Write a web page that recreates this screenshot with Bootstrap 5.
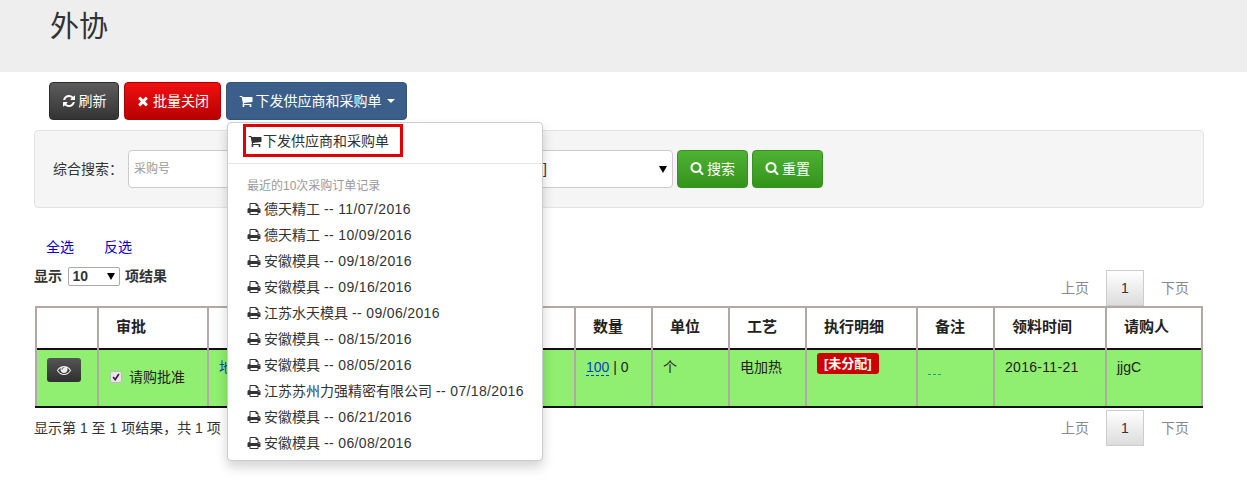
<!DOCTYPE html>
<html lang="zh">
<head>
<meta charset="utf-8">
<title>外协</title>
<link rel="stylesheet" href="https://cdn.jsdelivr.net/npm/bootstrap@5.3.0/dist/css/bootstrap.min.css">
<style>
html,body{min-height:481px}
body{font-family:"Liberation Sans","Noto Sans CJK SC",Arial,sans-serif;font-size:14px;color:#333;background:#fff;line-height:20px}
.ico{width:1em;height:1em;fill:currentColor;vertical-align:-2px;flex:none}
.page-top{background:#eee;height:72px;padding:8px 50px}
.page-top h1{font-size:29px;line-height:38px;margin:0;font-weight:400;color:#333}
.tool-row{margin:10px 0 0 49px;gap:5px;height:38px}
.gbtn{border:1px solid transparent;border-radius:4px;color:#fff;font-size:14px;height:38px;padding:0 12px;display:flex;align-items:center;gap:3px;white-space:nowrap}
.gbtn:hover{color:#fff}
.g-dark{background:linear-gradient(#5c5c5c,#343434);border-color:#2c2c2c;padding:0 11.5px}
.g-red{background:linear-gradient(#f01010,#b80000);border-color:#b00000;padding:0 11px}
.g-blue{background:#3b5f8a;border-color:#335378;border-radius:4px!important;padding:0 11.5px}
.g-green{background:linear-gradient(#4fb233,#33941a);border-color:#37931f}
.g-blue::after{content:"";border-top:4px solid #fff;border-left:4px solid transparent;border-right:4px solid transparent;margin-left:2px}
.order-menu{display:block;top:100%;left:1px;margin:2px 0 0;width:316px;height:339px;padding:1px 0 0;border:1px solid #ccc;border-radius:4px;box-shadow:0 6px 12px rgba(0,0,0,.175);z-index:20;font-size:14px}
.menu-first{display:flex;align-items:center;gap:1px;margin:0 0 6px 15px;width:160px;height:33px;border:3px solid #e00000;padding-left:2px;color:#333;text-decoration:none}
.order-menu .dropdown-divider{margin:0 0 13px;border-color:#e5e5e5;opacity:1}
.menu-head{font-size:12px;color:#999;line-height:18px;padding-left:19px;margin-bottom:1px}
.menu-line{display:flex;align-items:center;gap:3px;height:26px;padding-left:19px;color:#333;text-decoration:none;white-space:nowrap}
.dt{letter-spacing:.35px;margin-left:4px}
.search-well{margin:10px 43px 0 34px;height:78px;background:#f5f5f5;border:1px solid #e3e3e3;border-radius:4px;padding:0 18px;gap:4px}
.search-label{width:71px;flex:none}
.search-input{width:357px;height:38px;border:1px solid #ccc;border-radius:4px;padding:0 5px;font-size:12px;background:#fff;flex:none}
.search-input::placeholder{color:#999}
.search-select{width:192px;height:38px;margin-left:-8px;border:1px solid #ccc;border-radius:4px;background:#fff url("data:image/svg+xml,%3Csvg xmlns='http://www.w3.org/2000/svg' width='8' height='7'%3E%3Cpath d='M0 0h8L4 7z'/%3E%3C/svg%3E") no-repeat right 5px center;appearance:none;padding:0 16px 0 1px;color:#333;font-size:14px;flex:none}
.pick-row{margin:29px 0 0 46px;gap:30px;height:20px}
.pick-row a{color:#00c;text-decoration:none}
.len-row{margin:3px 49px 0 34px;height:46px}
.len-label{font-weight:700;padding-bottom:20px;display:flex;align-items:center;gap:5.500px}
.len-select{width:52px;height:19px;border:1px solid #aaa;border-radius:2px;font-weight:700;font-size:14px;line-height:16px;padding:0 0 0 4px;background:#fff url("data:image/svg+xml,%3Csvg xmlns='http://www.w3.org/2000/svg' width='8' height='7'%3E%3Cpath d='M0 0h8L4 7z'/%3E%3C/svg%3E") no-repeat right 4px center;appearance:none;color:#333}
.pager{display:flex;align-items:center;color:#888}
.pager span{width:46px;text-align:center}
.pager .pg-on{width:38px;height:36px;line-height:34px;margin:0 8px;border:1px solid #ccc;color:#333;background:linear-gradient(#fff,#dcdcdc)}
.data-wrap{margin:0 44px 0 35px}
.data-grid{width:1168px;table-layout:fixed;border-collapse:collapse;color:#222}
.data-grid th,.data-grid td{border-left:2px solid #b3a8a8;border-right:2px solid #b3a8a8;vertical-align:top;text-align:left}
.data-grid th{height:42px;border-top:2px solid #b3a8a8;font-weight:700;font-size:15px;color:#222;padding:9px 17px}
.data-grid td{height:58px;background:#90ee70;border-top:2px solid #111;border-bottom:2px solid #111;padding:7px 10px;font-size:14px}
.c1{width:62px}.c2{width:110px}.c3{width:367px}.c4,.c5,.c6{width:77px}.c7{width:111px}.c8{width:77px}.c9{width:112px}.c10{width:96px}
.eye-btn{width:34px;height:24px;display:flex;align-items:center;justify-content:center;border-radius:3px;background:linear-gradient(#555,#2f2f2f);color:#eee;margin-top:1px}
.eye-btn .ico{width:14px;height:14px}
.chk{display:flex;align-items:center;gap:7px;margin:10px 0 0 1px;white-space:nowrap}
.chk input{margin:0;width:12px;height:12px;appearance:none;border:1px solid #bbb;border-radius:2px;background:#e8e4e8 url("data:image/svg+xml,%3Csvg xmlns='http://www.w3.org/2000/svg' viewBox='0 0 12 12'%3E%3Cpath d='M2.500 6l2.500 3L9.500 2.500' fill='none' stroke='%23402040' stroke-width='2'/%3E%3C/svg%3E") center/100% no-repeat}
.qty{color:#0645c8;text-decoration:none;border-bottom:1px dashed #0645c8;line-height:16px;display:inline-block}
.tag-red{display:inline-block;background:#cc0000;color:#fff;font-weight:700;font-size:13px;line-height:17px;padding:2px 7px;border-radius:3px;margin-top:-4px;vertical-align:top;white-space:nowrap}
.foot-row{margin:2px 49px 0 34px;height:36px}
.dots{border-bottom:1px dashed #0a8;display:block;height:1px;margin-top:17px;width:13px}
.link-blue{color:#0645c8;text-decoration:none}
.num{letter-spacing:.3px}
</style>
</head>
<body>
<svg width="0" height="0" class="d-none">
<symbol id="i-search" viewBox="0 0 1664 1792"><path d="M1152 704q0-185-131.500-316.500t-316.500-131.500-316.500 131.500-131.500 316.500 131.500 316.500 316.500 131.500 316.500-131.500 131.500-316.500zm512 832q0 52-38 90t-90 38q-54 0-90-38l-343-342q-179 124-399 124-143 0-273.500-55.500t-225-150-150-225-55.500-273.500 55.500-273.500 150-225 225-150 273.500-55.500 273.500 55.500 225 150 150 225 55.500 273.500q0 220-124 399l343 343q37 37 37 90z"/></symbol>
<symbol id="i-times" viewBox="0 0 1792 1792"><path d="M1490 1322q0 40-28 68l-136 136q-28 28-68 28t-68-28l-294-294-294 294q-28 28-68 28t-68-28l-136-136q-28-28-28-68t28-68l294-294-294-294q-28-28-28-68t28-68l136-136q28-28 68-28t68 28l294 294 294-294q28-28 68-28t68 28l136 136q28 28 28 68t-28 68l-294 294 294 294q28 28 28 68z"/></symbol>
<symbol id="i-cart" viewBox="0 0 1792 1792"><path d="M704 1536q0 52-38 90t-90 38-90-38-38-90 38-90 90-38 90 38 38 90zm896 0q0 52-38 90t-90 38-90-38-38-90 38-90 90-38 90 38 38 90zm128-1088v512q0 24-16.500 42.500t-40.500 21.500l-1044 122q13 60 13 70 0 16-24 64h920q26 0 45 19t19 45-19 45-45 19h-1024q-26 0-45-19t-19-45q0-11 8-31.500t16-36 21.500-40 15.500-29.500l-177-823h-204q-26 0-45-19t-19-45 19-45 45-19h256q16 0 28.500 6.500t19.500 15.500 13 24.500 8 26 5.500 29.500 4.500 26h1201q26 0 45 19t19 45z"/></symbol>
<symbol id="i-print" viewBox="0 0 1792 1792"><path d="M448 1536h896v-256h-896v256zm0-640h896v-384h-160q-40 0-68-28t-28-68v-160h-640v640zm1152 64q0-26-19-45t-45-19-45 19-19 45 19 45 45 19 45-19 19-45zm128 0v416q0 13-9.500 22.500t-22.500 9.500h-224v160q0 40-28 68t-68 28h-960q-40 0-68-28t-28-68v-160h-224q-13 0-22.500-9.500t-9.500-22.500v-416q0-79 56.500-135.500t135.500-56.500h64v-544q0-40 28-68t68-28h672q40 0 88 20t76 48l152 152q28 28 48 76t20 88v256h64q79 0 135.500 56.500t56.500 135.500z"/></symbol>
<symbol id="i-refresh" viewBox="0 0 1792 1792"><path d="M1639 1056q0 5-1 7-64 268-268 434.500t-478 166.500q-146 0-282.500-55t-243.500-157l-129 129q-19 19-45 19t-45-19-19-45v-448q0-26 19-45t45-19h448q26 0 45 19t19 45-19 45l-137 137q71 66 161 102t187 36q134 0 250-65t186-179q11-17 53-117 8-23 30-23h192q13 0 22.500 9.500t9.500 22.500zm25-800v448q0 26-19 45t-45 19h-448q-26 0-45-19t-19-45 19-45l138-138q-148-137-349-137-134 0-250 65t-186 179q-11 17-53 117-8 23-30 23h-199q-13 0-22.500-9.500t-9.500-22.500v-7q65-268 270-434.500t480-166.500q146 0 284 55.500t245 156.500l130-129q19-19 45-19t45 19 19 45z"/></symbol>
<symbol id="i-eye" viewBox="0 0 1792 1792"><path d="M1664 960q-152-236-381-353 61 104 61 225 0 185-131.500 316.500t-316.500 131.500-316.500-131.500-131.500-316.500q0-121 61-225-229 117-381 353 133 205 333.500 326.500t434.500 121.500 434.500-121.500 333.500-326.500zm-720-384q0-20-14-34t-34-14q-125 0-214.500 89.500t-89.500 214.500q0 20 14 34t34 14 34-14 14-34q0-86 61-147t147-61q20 0 34-14t14-34zm848 384q0 34-20 69-140 230-376.500 368.500t-499.500 138.500-499.500-139-376.500-368q-20-35-20-69t20-69q140-229 376.500-368t499.500-139 499.500 139 376.500 368q20 35 20 69z"/></symbol>
</svg>

<div class="page-top"><h1>外协</h1></div>

<div class="d-flex tool-row">
  <button type="button" class="gbtn g-dark"><svg class="ico"><use href="#i-refresh"/></svg>刷新</button>
  <button type="button" class="gbtn g-red"><svg class="ico"><use href="#i-times"/></svg>批量关闭</button>
  <div class="btn-group">
    <button type="button" class="gbtn g-blue"><svg class="ico"><use href="#i-cart"/></svg>下发供应商和采购单</button>
    <div class="dropdown-menu order-menu">
      <a class="menu-first" href="#"><svg class="ico"><use href="#i-cart"/></svg>下发供应商和采购单</a>
      <hr class="dropdown-divider">
      <div class="menu-head">最近的10次采购订单记录</div>
      <a class="menu-line" href="#"><svg class="ico"><use href="#i-print"/></svg><span>德天精工<span class="dt">-- 11/07/2016</span></span></a>
      <a class="menu-line" href="#"><svg class="ico"><use href="#i-print"/></svg><span>德天精工<span class="dt">-- 10/09/2016</span></span></a>
      <a class="menu-line" href="#"><svg class="ico"><use href="#i-print"/></svg><span>安徽模具<span class="dt">-- 09/18/2016</span></span></a>
      <a class="menu-line" href="#"><svg class="ico"><use href="#i-print"/></svg><span>安徽模具<span class="dt">-- 09/16/2016</span></span></a>
      <a class="menu-line" href="#"><svg class="ico"><use href="#i-print"/></svg><span>江苏水天模具<span class="dt">-- 09/06/2016</span></span></a>
      <a class="menu-line" href="#"><svg class="ico"><use href="#i-print"/></svg><span>安徽模具<span class="dt">-- 08/15/2016</span></span></a>
      <a class="menu-line" href="#"><svg class="ico"><use href="#i-print"/></svg><span>安徽模具<span class="dt">-- 08/05/2016</span></span></a>
      <a class="menu-line" href="#"><svg class="ico"><use href="#i-print"/></svg><span>江苏苏州力强精密有限公司<span class="dt">-- 07/18/2016</span></span></a>
      <a class="menu-line" href="#"><svg class="ico"><use href="#i-print"/></svg><span>安徽模具<span class="dt">-- 06/21/2016</span></span></a>
      <a class="menu-line" href="#"><svg class="ico"><use href="#i-print"/></svg><span>安徽模具<span class="dt">-- 06/08/2016</span></span></a>
    </div>
  </div>
</div>

<div class="d-flex align-items-center search-well">
  <span class="search-label">综合搜索：</span>
  <input class="search-input" type="text" placeholder="采购号">
  <select class="search-select"><option>[全部时间]</option></select>
  <button type="button" class="gbtn g-green"><svg class="ico"><use href="#i-search"/></svg>搜索</button>
  <button type="button" class="gbtn g-green"><svg class="ico"><use href="#i-search"/></svg>重置</button>
</div>

<div class="d-flex pick-row"><a href="#">全选</a><a href="#">反选</a></div>

<div class="d-flex justify-content-between align-items-end len-row">
  <div class="len-label">显示 <select class="len-select"><option>10</option></select> 项结果</div>
  <div class="pager"><span>上页</span><span class="pg-on">1</span><span>下页</span></div>
</div>

<div class="data-wrap">
<table class="data-grid">
  <colgroup><col class="c1"><col class="c2"><col class="c3"><col class="c4"><col class="c5"><col class="c6"><col class="c7"><col class="c8"><col class="c9"><col class="c10"></colgroup>
  <thead><tr>
    <th></th><th>审批</th><th></th><th>数量</th><th>单位</th><th>工艺</th><th>执行明细</th><th>备注</th><th>领料时间</th><th>请购人</th>
  </tr></thead>
  <tbody><tr>
    <td><span class="eye-btn"><svg class="ico"><use href="#i-eye"/></svg></span></td>
    <td><label class="chk"><input type="checkbox" checked>请购批准</label></td>
    <td><a class="link-blue" href="#">地</a></td>
    <td><a class="qty" href="#">100</a> | 0</td>
    <td>个</td>
    <td>电加热</td>
    <td><span class="tag-red">[未分配]</span></td>
    <td><span class="dots"></span></td>
    <td class="num">2016-11-21</td>
    <td>jjgC</td>
  </tr></tbody>
</table>
</div>

<div class="d-flex justify-content-between align-items-center foot-row">
  <div>显示第 1 至 1 项结果，共 1 项</div>
  <div class="pager"><span>上页</span><span class="pg-on">1</span><span>下页</span></div>
</div>
<script src="https://cdn.jsdelivr.net/npm/bootstrap@5.3.0/dist/js/bootstrap.bundle.min.js"></script>
</body>
</html>
